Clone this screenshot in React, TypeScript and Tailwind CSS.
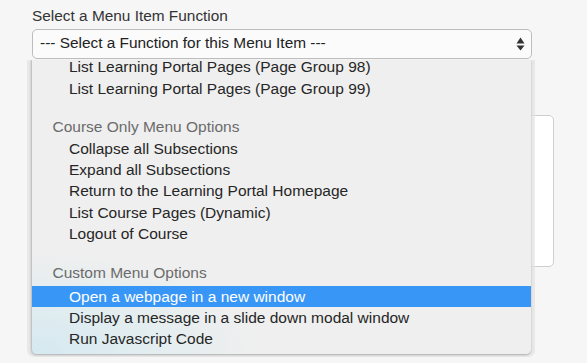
import React from "react";

const font = { fontFamily: '"Liberation Sans", Arial, sans-serif' };

function Row({ text, header, active, className = "" }: { text: string; header?: boolean; active?: boolean; className?: string }) {
  return (
    <div
      className={
        "whitespace-nowrap text-[15.5px] " +
        (className.includes("h-[") ? "" : "h-[21.4px] leading-[21.4px] ") +
        (header ? "pl-[20.5px] text-[#6b6b6b] " : "pl-[37px] text-[#262626] ") +
        (active ? "bg-[#3896f7] text-white " : "") +
        className
      }
    >
      {text}
    </div>
  );
}

export default function App() {
  return (
    <div className="relative w-[587px] h-[363px] overflow-hidden bg-[#f6f6f6]" style={font}>
      <div className="pl-[32px] pt-[7px]">
        <div className="text-[15.4px] leading-[18px] text-[#333]">Select a Menu Item Function</div>
        <div className="mt-[4px] w-[500px] h-[30px] rounded-[5px] border border-[#bdbdbd] bg-[#fbfbfb] flex items-start justify-between pl-[7px] pr-[6px]">
          <span className="text-[15.4px] leading-[26px] text-[#222]">--- Select a Function for this Menu Item ---</span>
          <svg width="9" height="15" viewBox="0 0 9 15" className="mt-[7px]">
            <path d="M4.5 0.5 L8.5 6.5 L0.5 6.5 Z" fill="#333" />
            <path d="M0.5 8.5 L8.5 8.5 L4.5 13.5 Z" fill="#333" />
          </svg>
        </div>
        <div className="mt-[56px] w-[522px] h-[152px] rounded-[5px] border border-[#cfcfcf] bg-white" />
      </div>

      <div className="absolute left-[27px] top-[60px] w-[508px] h-[297px] rounded-b-[7px] bg-[#e3e3e3]/70" />
      <div className="absolute left-[31px] top-[60px] w-[500px] h-[294px] rounded-b-[5px] overflow-hidden border-l border-[#c4c4c4] bg-[radial-gradient(ellipse_45%_35%_at_0%_100%,#d5e9f1_0%,#e2edf0_50%,#efefef_100%)] shadow-[0_1px_2px_rgba(0,0,0,0.25)]">
        <div>
          <Row text="List Learning Portal Pages (Page Group 98)" className="h-[17.5px] leading-[13.3px] pt-[0px]" />
          <Row text="List Learning Portal Pages (Page Group 99)" />
          <Row text="Course Only Menu Options" header className="mt-[17.4px]" />
          <Row text="Collapse all Subsections" />
          <Row text="Expand all Subsections" />
          <Row text="Return to the Learning Portal Homepage" />
          <Row text="List Course Pages (Dynamic)" />
          <Row text="Logout of Course" />
          <Row text="Custom Menu Options" header className="mt-[17.6px]" />
          <Row text="Open a webpage in a new window" active className="mt-[2px]" />
          <Row text="Display a message in a slide down modal window" />
          <Row text="Run Javascript Code" />
        </div>
      </div>
    </div>
  );
}
